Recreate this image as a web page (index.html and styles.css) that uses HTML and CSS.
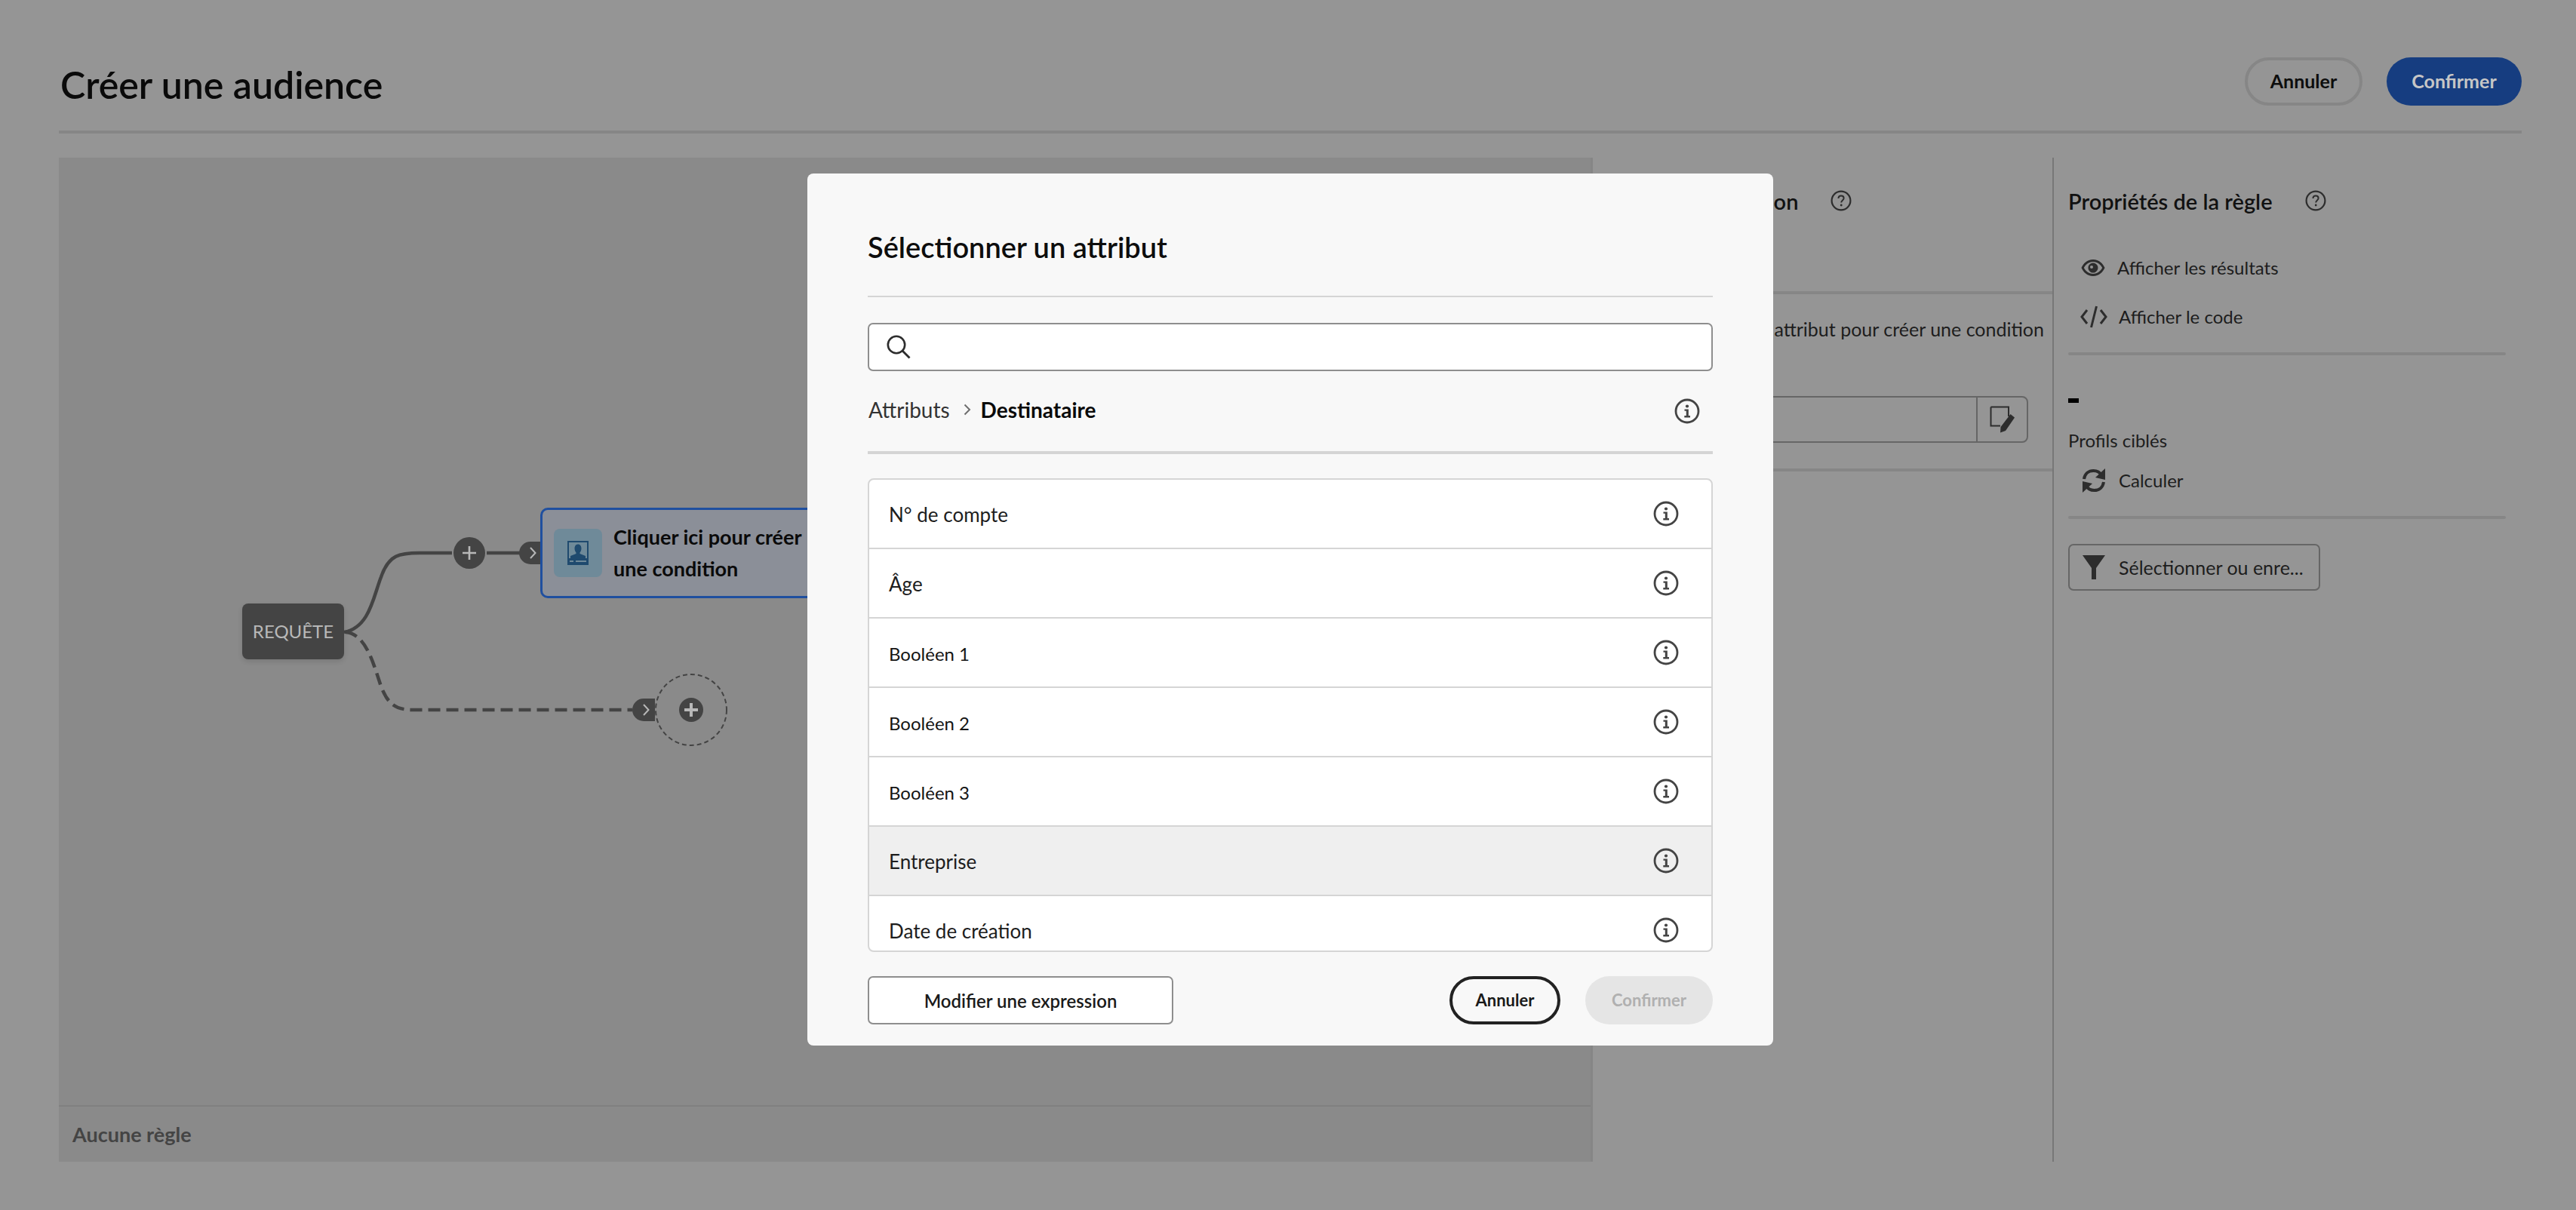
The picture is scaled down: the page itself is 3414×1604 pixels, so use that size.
FILE: index.html
```html
<!DOCTYPE html>
<html lang="fr">
<head>
<meta charset="utf-8">
<title>Créer une audience</title>
<link rel="stylesheet" href="styles.css">
</head>
<body>
<svg class="defs" width="0" height="0" aria-hidden="true">
  <symbol id="info" viewBox="0 0 34 34">
    <circle cx="17" cy="17" r="15" fill="none" stroke="#444" stroke-width="2.8"/>
    <circle cx="17" cy="10.5" r="2.1" fill="#444"/>
    <path d="M13.5 14.5H18.8V23H21V25.4H13.3V23H15.8V16.8H13.5Z" fill="#444"/>
  </symbol>
  <symbol id="help" viewBox="0 0 28 28">
    <circle cx="14" cy="14" r="12.4" fill="none" stroke="#2d2d2d" stroke-width="2.2"/>
    <path d="M10.4 11C10.6 8.8 12 7.6 14 7.6C16.1 7.6 17.6 8.9 17.6 10.8C17.6 13.4 14.2 13.6 14.2 16.6" fill="none" stroke="#2d2d2d" stroke-width="2"/>
    <circle cx="14.2" cy="20" r="1.4" fill="#2d2d2d"/>
  </symbol>
</svg>

<div class="page">
  <header class="header">
    <h1 class="title">Créer une audience</h1>
    <div class="actions">
      <button class="pill pill-quiet">Annuler</button>
      <button class="pill pill-primary">Confirmer</button>
    </div>
  </header>

  <main class="workspace">
    <section class="canvas">
      <div class="diagram">
        <svg class="wires" width="2030" height="1256" viewBox="78 209 2030 1256" aria-hidden="true">
          <path d="M456 838C490 832 495 790 505 765C515 735 530 733 556 733H599" fill="none" stroke="#444" stroke-width="4.5"/>
          <path d="M645 733H690" fill="none" stroke="#444" stroke-width="4.5"/>
          <circle cx="622" cy="733" r="21" fill="#444"/>
          <path d="M622 724V742M613 733H631" stroke="#b8b8b8" stroke-width="2.6"/>
          <path d="M717 718H703A15 15 0 0 0 703 748H717Z" fill="#444"/>
          <path d="M703 726L709.500 733L703 740" fill="none" stroke="#b8b8b8" stroke-width="2"/>
          <path d="M458 838C485 840 495 880 505 910C515 935 525 941 548 941H838" fill="none" stroke="#444" stroke-width="4.5" stroke-dasharray="16 8"/>
          <path d="M868 926H853A15 15 0 0 0 853 956H868Z" fill="#444"/>
          <path d="M853 934L859.500 941L853 948" fill="none" stroke="#b8b8b8" stroke-width="2"/>
          <circle cx="916" cy="941" r="47" fill="none" stroke="#444" stroke-width="2" stroke-dasharray="6 4"/>
          <circle cx="916" cy="941" r="16" fill="#444"/>
          <path d="M916 932V950M907 941H925" stroke="#b8b8b8" stroke-width="4"/>
        </svg>
        <div class="node-query">REQUÊTE</div>
        <div class="node-condition">
          <span class="node-icon">
            <svg width="28" height="32" viewBox="0 0 28 32" aria-hidden="true">
              <path fill-rule="evenodd" d="M0 0H28V32H0ZM2 2V23H26V2Z" fill="#1f4a6e"/>
              <path d="M14 4.500C17 4.500 18.500 7 18.500 10C18.500 12.500 17.500 14.500 16.500 15.500V17L24 20V24H4V20L11.500 17V15.500C10.500 14.500 9.500 12.500 9.500 10C9.500 7 11 4.500 14 4.500Z" fill="#1f4a6e"/>
              <path d="M3 27H8M11 27H25" stroke="#6f8a99" stroke-width="1.800"/>
            </svg>
          </span>
          <span class="node-text">Cliquer ici pour créer<br>une condition</span>
        </div>
      </div>
      <div class="status">Aucune règle</div>
    </section>

    <aside class="panel panel-condition">
      <div class="panel-head panel-head-left">
        <h2 class="panel-title">Condition</h2>
        <svg class="help" width="28" height="28" aria-hidden="true"><use href="#help"/></svg>
      </div>
      <div class="condition-body">
        <p class="hint">Sélectionnez un attribut pour créer une condition</p>
        <div class="expr">
          <div class="expr-input"></div>
          <div class="expr-btn">
            <svg width="34" height="36" viewBox="0 0 34 36" aria-hidden="true">
              <path d="M1.500 1.500H25V14M1.500 1.500V26.500H14" fill="none" stroke="#2d2d2d" stroke-width="2"/>
              <path d="M27.500 11L33 15.500L21 33L14 35.500L14.500 28Z" fill="#2d2d2d"/>
            </svg>
          </div>
        </div>
      </div>
    </aside>

    <aside class="panel panel-rule">
      <div class="panel-head panel-head-rule">
        <h2 class="panel-title">Propriétés de la règle</h2>
        <svg class="help" width="28" height="28" aria-hidden="true"><use href="#help"/></svg>
      </div>
      <ul class="links">
        <li class="link link-eye">
          <svg class="link-icon" width="32" height="24" viewBox="0 0 32 24" aria-hidden="true">
            <path fill-rule="evenodd" d="M16 1C24 1 29 6.500 31.500 12C29 17.500 24 23 16 23C8 23 3 17.500 .5 12C3 6.500 8 1 16 1ZM16 4C10 4 6 8 3.800 12C6 16 10 20 16 20C22 20 26 16 28.200 12C26 8 22 4 16 4Z" fill="#2d2d2d"/>
            <path fill-rule="evenodd" d="M16 5.500A6.500 6.500 0 1 1 15.900 5.500ZM14 9A2 2 0 0 0 14 13A2 2 0 0 0 14 9Z" fill="#2d2d2d"/>
          </svg>
          <span>Afficher les résultats</span>
        </li>
        <li class="link link-code">
          <svg class="link-icon" width="36" height="30" viewBox="0 0 36 30" aria-hidden="true">
            <path d="M9 6L2 15L9 24M27 6L34 15L27 24M21.500 1L14.500 29" fill="none" stroke="#2d2d2d" stroke-width="3"/>
          </svg>
          <span>Afficher le code</span>
        </li>
      </ul>
      <div class="sep"></div>
      <div class="dash"></div>
      <div class="profiles">Profils ciblés</div>
      <div class="link link-calc">
        <svg class="link-icon" width="32" height="32" viewBox="0 0 32 32" aria-hidden="true">
          <path d="M3 14C4 7 9 3 15.500 3C20 3 24 5 26 9" fill="none" stroke="#2d2d2d" stroke-width="4"/>
          <path d="M31 15V0L18 12Z" fill="#2d2d2d"/>
          <path d="M29 18C28 25 23 29 16.500 29C12 29 8 27 6 23" fill="none" stroke="#2d2d2d" stroke-width="4"/>
          <path d="M1 17V32L14 20Z" fill="#2d2d2d"/>
        </svg>
        <span>Calculer</span>
      </div>
      <div class="sep"></div>
      <button class="select-btn">
        <svg class="funnel" width="30" height="32" viewBox="0 0 30 32" aria-hidden="true">
          <path d="M0 0H30L18 17V32H12V17Z" fill="#2d2d2d"/>
        </svg>
        <span>Sélectionner ou enre...</span>
      </button>
    </aside>
  </main>
</div>

<div class="modal" role="dialog">
  <h2 class="modal-title">Sélectionner un attribut</h2>
  <div class="modal-rule"></div>
  <div class="search">
    <svg width="32" height="32" viewBox="0 0 32 32" aria-hidden="true">
      <circle cx="13" cy="13" r="11.200" fill="none" stroke="#2d2d2d" stroke-width="2.600"/>
      <path d="M21 21L30.500 30.500" stroke="#2d2d2d" stroke-width="2.800"/>
    </svg>
  </div>
  <div class="crumbs">
    <span class="crumb">Attributs</span>
    <svg class="crumb-sep" width="10" height="16" viewBox="0 0 10 16" aria-hidden="true">
      <path d="M1.500 1.500L8 8L1.500 14.500" fill="none" stroke="#6e6e6e" stroke-width="2"/>
    </svg>
    <span class="crumb-current">Destinataire</span>
    <svg class="crumb-info" width="34" height="34" aria-hidden="true"><use href="#info"/></svg>
  </div>
  <ul class="list">
    <li class="row"><span>N° de compte</span><svg width="34" height="34" aria-hidden="true"><use href="#info"/></svg></li>
    <li class="row"><span>Âge</span><svg width="34" height="34" aria-hidden="true"><use href="#info"/></svg></li>
    <li class="row row-small"><span>Booléen 1</span><svg width="34" height="34" aria-hidden="true"><use href="#info"/></svg></li>
    <li class="row row-small"><span>Booléen 2</span><svg width="34" height="34" aria-hidden="true"><use href="#info"/></svg></li>
    <li class="row row-small"><span>Booléen 3</span><svg width="34" height="34" aria-hidden="true"><use href="#info"/></svg></li>
    <li class="row row-hover"><span>Entreprise</span><svg width="34" height="34" aria-hidden="true"><use href="#info"/></svg></li>
    <li class="row"><span>Date de création</span><svg width="34" height="34" aria-hidden="true"><use href="#info"/></svg></li>
  </ul>
  <footer class="modal-foot">
    <button class="expr-edit">Modifier une expression</button>
    <div class="foot-actions">
      <button class="pill pill-outline">Annuler</button>
      <button class="pill pill-disabled">Confirmer</button>
    </div>
  </footer>
</div>
</body>
</html>
```

FILE: styles.css
```css
* { box-sizing: border-box; }
html, body { margin: 0; padding: 0; }
body {
  width: 3414px;
  height: 1604px;
  overflow: hidden;
  position: relative;
  background: #959595;
  font-family: "Lato", "Noto Sans", sans-serif;
  color: #111;
}
.defs { position: absolute; }
button { font-family: inherit; margin: 0; cursor: default; }
ul { list-style: none; margin: 0; padding: 0; }
h1, h2, p { margin: 0; }

.page { padding: 76px 72px 0 78px; }
.header {
  display: flex;
  justify-content: space-between;
  align-items: flex-start;
  height: 101px;
  border-bottom: 4px solid #868686;
}
.title {
  font-size: 50px;
  line-height: 64px;
  font-weight: 600;
  color: #0a0a0a;
  padding: 4px 0 0 2px;
}
.actions { display: flex; gap: 32px; }
.pill {
  height: 64px;
  border-radius: 32px;
  font-size: 25px;
  font-weight: 700;
  padding: 0 0 2px;
  text-align: center;
}
.pill-quiet { width: 156px; background: transparent; border: 4px solid #868686; color: #0d0d0d; }
.pill-primary { width: 179px; background: #163d80; border: 0; color: #c6c6c6; }
.pill-outline { width: 147px; background: transparent; border: 4px solid #222; color: #1a1a1a; font-size: 22px; }
.pill-disabled { width: 169px; background: #e5e5e5; border: 0; color: #b0b0b0; font-size: 22px; }

.workspace {
  display: grid;
  grid-template-columns: 2030px 614px 620px;
  height: 1331px;
  margin-top: 32px;
}
.canvas { background: #8a8a8a; display: flex; flex-direction: column; }
.diagram { position: relative; flex: 1; overflow: hidden; }
.wires { position: absolute; left: 0; top: 0; }
.node-query {
  position: absolute;
  left: 243px;
  top: 591px;
  width: 135px;
  height: 74px;
  background: #444;
  border-radius: 8px;
  color: #b8b8b8;
  font-size: 24px;
  line-height: 74px;
  text-align: center;
  box-shadow: 0 3px 6px rgba(0,0,0,.12);
}
.node-condition {
  position: absolute;
  left: 638px;
  top: 464px;
  width: 520px;
  height: 120px;
  background: #8b8f98;
  border: 3px solid #1f4f9f;
  border-radius: 10px;
  display: flex;
  align-items: center;
  gap: 15px;
  padding-left: 15px;
}
.node-icon {
  width: 64px;
  height: 64px;
  border-radius: 8px;
  background: #6f8a99;
  display: flex;
  align-items: center;
  justify-content: center;
}
.node-text { font-size: 27px; line-height: 42px; font-weight: 700; color: #0a0a0a; white-space: nowrap; }
.status {
  height: 75px;
  border-top: 2px solid #808080;
  padding-left: 18px;
  font-size: 27px;
  line-height: 73px;
  font-weight: 700;
  color: #444;
}

.panel { height: 100%; }
.panel-condition { border-left: 3px solid #868686; border-right: 2px solid #777; }
.panel-head { display: flex; align-items: center; }
.panel-head-left { padding: 0 0 61px 146px; height: 181px; border-bottom: 4px solid #868686; gap: 43px; }
.panel-head-rule { padding: 3px 0 0 19px; height: 113px; gap: 43px; }
.panel-title { font-size: 29px; line-height: 40px; font-weight: 600; color: #111; white-space: nowrap; }
.help { margin-bottom: 3px; }
.condition-body { height: 235px; border-bottom: 4px solid #868686; padding-top: 29px; }
.hint { font-size: 25px; line-height: 34px; color: #1d1d1d; text-align: right; padding-right: 11px; white-space: nowrap; }
.expr { display: flex; margin: 72px 32px 0 200px; height: 62px; border: 2px solid #666; border-radius: 8px; }
.expr-input { flex: 1; }
.expr-btn { width: 67px; border-left: 2px solid #666; display: flex; align-items: center; justify-content: center; }

.links { padding-left: 19px; }
.link {
  display: flex;
  align-items: center;
  height: 65px;
  font-size: 24px;
  color: #1d1d1d;
}
.link-icon { flex: none; }
.link-eye .link-icon { margin: 0 16px 0 17px; }
.link-code .link-icon { margin: 0 15px 0 16px; }
.sep { height: 4px; background: #868686; margin: 15px 21px 0 19px; border-radius: 2px; }
.dash { width: 14px; height: 6px; background: #000; margin: 57px 0 0 19px; }
.profiles { font-size: 24px; line-height: 34px; color: #1d1d1d; margin: 33px 0 0 19px; }
.link-calc { margin: 3px 0 0 19px; }
.link-calc .link-icon { margin: 0 17px 0 18px; }
.select-btn {
  display: flex;
  align-items: center;
  gap: 18px;
  width: 334px;
  height: 62px;
  margin: 33px 0 0 19px;
  padding: 0 0 0 17px;
  background: transparent;
  border: 2px solid #666;
  border-radius: 7px;
  font-size: 25px;
  color: #1d1d1d;
}

.modal {
  position: absolute;
  left: 1070px;
  top: 230px;
  width: 1280px;
  height: 1156px;
  background: #f8f8f8;
  border-radius: 8px;
  padding: 70px 80px 0;
  display: flex;
  flex-direction: column;
}
.modal-title { font-size: 38px; line-height: 54px; font-weight: 600; color: #0d0d0d; height: 54px; }
.modal-rule { height: 2px; background: #d5d5d5; margin-top: 38px; }
.search {
  height: 64px;
  margin-top: 34px;
  background: #fff;
  border: 2px solid #8e8e8e;
  border-radius: 7px;
  display: flex;
  align-items: center;
  padding-left: 23px;
}
.crumbs {
  height: 110px;
  border-bottom: 4px solid #d5d5d5;
  display: flex;
  align-items: center;
  padding-bottom: 4px;
}
.crumb { font-size: 28px; color: #333; padding-left: 1px; }
.crumb-sep { margin: 0 13px 0 18px; }
.crumb-current { font-size: 28px; font-weight: 700; color: #0a0a0a; }
.crumb-info { margin: 3px 17px 0 auto; }
.list {
  height: 628px;
  margin-top: 32px;
  background: #fff;
  border: 2px solid #d5d5d5;
  border-radius: 8px;
  overflow: hidden;
}
.row {
  height: 92px;
  border-bottom: 2px solid #d5d5d5;
  display: flex;
  align-items: center;
  justify-content: space-between;
  padding: 0 43px 0 26px;
  font-size: 26px;
  color: #1d1d1d;
}
.row span { padding-top: 2px; }
.row-small { font-size: 24px; color: #141414; }
.row-hover { background: #efefef; }
.modal-foot { display: flex; justify-content: space-between; margin-top: 32px; }
.expr-edit {
  width: 405px;
  height: 64px;
  background: #fff;
  border: 2px solid #8e8e8e;
  border-radius: 7px;
  font-size: 24px;
  font-weight: 600;
  color: #1a1a1a;
}
.foot-actions { display: flex; gap: 33px; }
```
